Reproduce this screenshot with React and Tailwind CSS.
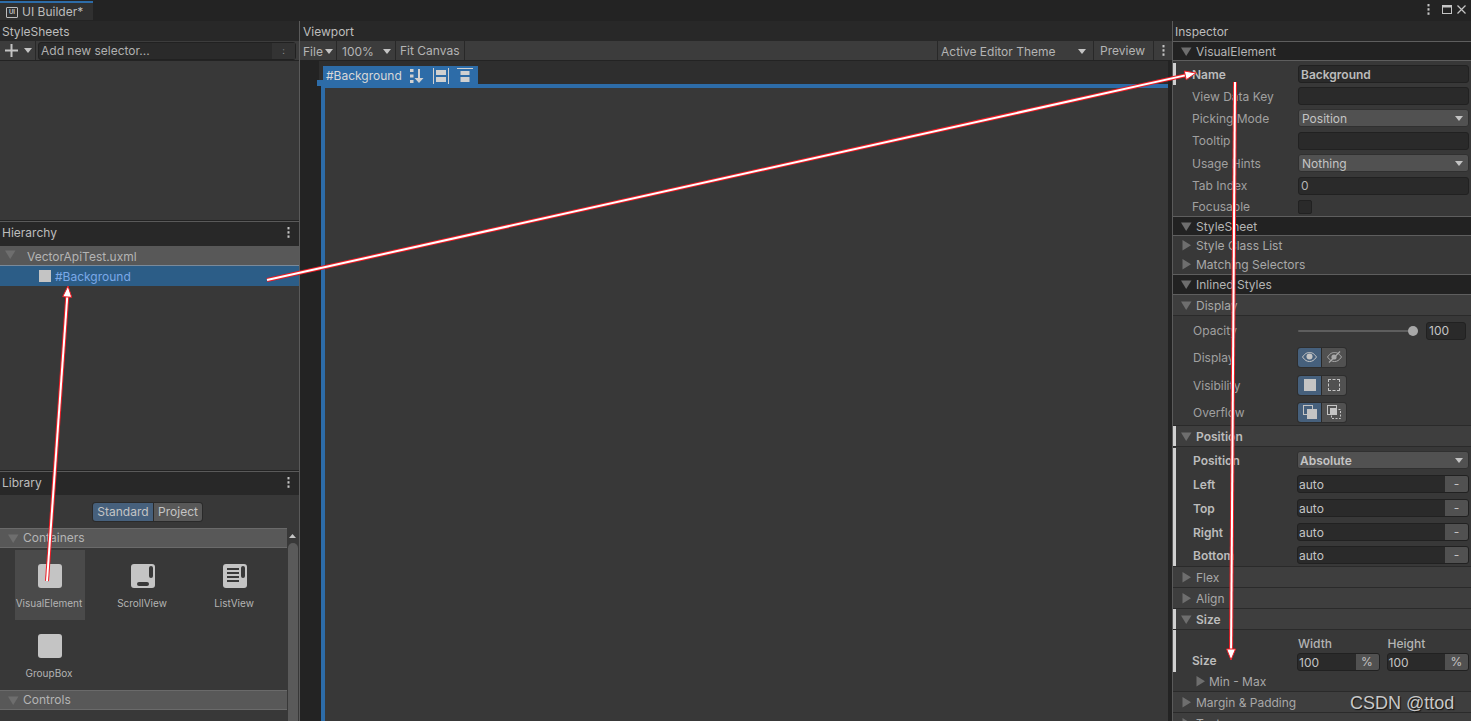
import React from 'react';

const FONT = "font-['Inter','Noto_Sans',sans-serif]";

function Caret({ open = true, className = '' }) {
  return (
    <svg width="11" height="11" viewBox="0 0 11 11" className={`shrink-0 ${className}`}>
      {open ? <path d="M0 1.5h10.5L5.2 10z" fill="#6e6e6e" /> : <path d="M1.5 0v10.5L10 5.2z" fill="#6e6e6e" />}
    </svg>
  );
}

function SmallCaret({ color = '#c4c4c4' }) {
  return (
    <svg width="8" height="5" viewBox="0 0 8 5" className="shrink-0">
      <path d="M0 0h8L4 5z" fill={color} />
    </svg>
  );
}

function Dots({ className = '' }) {
  return (
    <svg width="3" height="11" viewBox="0 0 3 11" className={className}>
      <rect x="0.5" y="0" width="2" height="2.4" fill="#c4c4c4" />
      <rect x="0.5" y="4.2" width="2" height="2.4" fill="#c4c4c4" />
      <rect x="0.5" y="8.4" width="2" height="2.4" fill="#c4c4c4" />
    </svg>
  );
}

function PanelTitle({ title, menu, className = 'h-5 pt-[1px]' }) {
  return (
    <div className={`flex items-center justify-between bg-[#282828] pl-[2px] pr-[9px] text-[12px] text-[#bdbdbd] ${className}`}>
      <span>{title}</span>
      {menu && <Dots />}
    </div>
  );
}

function TileIcon({ kind }) {
  return (
    <svg width="24" height="24" viewBox="0 0 24 24">
      <rect width="24" height="24" rx="3" fill="#c4c4c4" />
      {kind === 'scroll' && (
        <>
          <rect x="18" y="2" width="4" height="12" rx="2" fill="#383838" />
          <rect x="6" y="18" width="12" height="4" rx="2" fill="#383838" />
        </>
      )}
      {kind === 'list' && (
        <>
          <rect x="4" y="4" width="12" height="2" fill="#383838" />
          <rect x="4" y="8" width="12" height="2" fill="#383838" />
          <rect x="4" y="12" width="12" height="2" fill="#383838" />
          <rect x="4" y="16" width="12" height="2" fill="#383838" />
          <rect x="18" y="2" width="4" height="12" rx="2" fill="#383838" />
        </>
      )}
    </svg>
  );
}

function Tile({ name, kind, active }) {
  return (
    <div className={`flex h-[70px] w-[70px] flex-col items-center pt-[14px] ${active ? 'bg-[#4a4a4a]' : ''}`}>
      <TileIcon kind={kind} />
      <span className="mt-[9px] mr-[2px] text-[10px] leading-[12px] whitespace-nowrap text-[#b4b4b4]">{name}</span>
    </div>
  );
}

function LibraryCategory({ title }) {
  return (
    <div className="flex h-5 items-center gap-[4px] border-y border-[#6a6a6a] bg-[#585858] pl-[8px] text-[12px] text-[#b4b4b4]">
      <Caret />
      <span>{title}</span>
    </div>
  );
}

function LeftColumn() {
  return (
    <div className="flex w-[300px] shrink-0 flex-col border-r border-[#5a5a5a] bg-[#383838]">
      <PanelTitle title="StyleSheets" />
      <div className="flex h-5 items-center border-b border-[#232323] bg-[#3c3c3c]">
        <div className="flex h-full w-[36px] items-center gap-[6px] border-r border-[#282828] pl-[5px]">
          <svg width="13" height="13" viewBox="0 0 13 13">
            <path d="M5.5 0h2v5.5H13v2H7.5V13h-2V7.5H0v-2h5.5z" fill="#c4c4c4" />
          </svg>
          <SmallCaret />
        </div>
        <div className="ml-[2px] flex h-[18px] w-[258px] items-center justify-between rounded-[3px] border border-[#212121] bg-[#2a2a2a] pl-[2px] text-[12px] text-[#b0b0b0]">
          <span className="pt-[1px]">Add new selector...</span>
          <span className="flex h-full w-[23px] items-center justify-center bg-[#333333] text-[9px] text-[#8a8a8a]">:</span>
        </div>
      </div>
      <div className="h-[160px] border-b border-[#232323]" />
      <PanelTitle title="Hierarchy" menu className="h-[25px] border-t border-[#5a5a5a] pb-[3px]" />
      <div className="flex h-[19px] items-center gap-[11px] bg-[#585858] pt-[3px] pl-[5px] text-[12px] text-[#b4b4b4]">
        <Caret className="-mt-[5px]" />
        <span>VectorApiTest.uxml</span>
      </div>
      <div className="flex h-[21px] items-center border-t border-[#7a8a9a] bg-[#2c5d87] pl-[39px] text-[12px] text-[#7ba9e8]">
        <span className="mr-[4px] h-3 w-3 bg-[#c4c4c4]" />
        <span className="pt-[1px]">#Background</span>
      </div>
      <div className="h-[185px] border-b border-[#232323]" />
      <PanelTitle title="Library" menu className="h-[24px] border-t border-[#5a5a5a] pb-[2px]" />
      <div className="flex h-[33px] items-center justify-center pr-[4px]">
        <div className="flex h-[20px] items-center rounded-[3px] border border-[#2a2a2a] text-[12px] text-[#c4c4c4]">
          <span className="flex h-full w-[61px] items-center justify-center rounded-l-[3px] border-r border-[#2a2a2a] bg-[#46607c]">Standard</span>
          <span className="flex h-full w-[48px] items-center justify-center rounded-r-[3px] bg-[#585858]">Project</span>
        </div>
      </div>
      <div className="flex min-h-0 flex-1">
        <div className="w-[287px] shrink-0 overflow-hidden">
          <LibraryCategory title="Containers" />
          <div className="grid grid-cols-[93px_92px_70px] pt-[2px] pl-[15px]">
            <Tile name="VisualElement" active />
            <Tile name="ScrollView" kind="scroll" />
            <Tile name="ListView" kind="list" />
            <Tile name="GroupBox" />
          </div>
          <LibraryCategory title="Controls" />
        </div>
        <div className="flex w-[11px] flex-col items-center pt-[6px]">
          <svg width="7" height="4" viewBox="0 0 7 4">
            <path d="M3.5 0L7 4H0z" fill="#c4c4c4" />
          </svg>
          <div className="mt-[5px] w-[10px] flex-1 rounded-t-[5px] bg-[#5a5a5a]" />
        </div>
      </div>
    </div>
  );
}

function ViewportToolbar() {
  return (
    <div className="flex h-5 items-center border-b border-[#232323] bg-[#3c3c3c] text-[12px] text-[#b4b4b4]">
      <div className="flex h-full w-[37px] items-center gap-[2px] border-r border-[#282828] pt-[2px] pl-[3px]">
        File <SmallCaret />
      </div>
      <div className="flex h-full w-[59px] items-center justify-between border-r border-[#282828] pt-[2px] pr-[4px] pl-[5px]">
        100% <SmallCaret />
      </div>
      <div className="flex h-full w-[69px] items-center border-r border-[#282828] pt-[1px] pl-[4px]">Fit Canvas</div>
      <div className="flex-1" />
      <div className="flex h-full w-[157px] items-center justify-between border-x border-[#282828] pt-[2px] pr-[7px] pl-[3px]">
        Active Editor Theme <SmallCaret />
      </div>
      <div className="flex h-full w-[60px] items-center border-r border-[#282828] pt-[1px] pl-[6px]">Preview</div>
      <div className="flex w-[18px] justify-center">
        <Dots />
      </div>
    </div>
  );
}

function CanvasHeaderIcons() {
  return (
    <div className="ml-[8px] flex items-center">
      <svg width="14" height="14" viewBox="0 0 14 14">
        <path d="M0 0h3.5v3H0zM0 5.5h3.5v3H0zM0 11h3.5v3H0z" fill="#d0d0d0" />
        <path d="M8 0h2v9h3.5L9 14 4.5 9H8z" fill="#d0d0d0" />
      </svg>
      <svg width="16" height="16" viewBox="0 0 16 16" className="ml-[9px]">
        <path d="M0.5 0v16M15.5 0v16" stroke="#d0d0d0" strokeWidth="1" />
        <rect x="3" y="2" width="10" height="5" fill="#d0d0d0" />
        <rect x="3" y="9" width="10" height="5" fill="#d0d0d0" />
      </svg>
      <svg width="16" height="16" viewBox="0 0 16 16" className="ml-[8px]">
        <path d="M0 0.5h16" stroke="#d0d0d0" strokeWidth="1" />
        <rect x="3.5" y="3" width="9" height="4" fill="#d0d0d0" />
        <rect x="3.5" y="9" width="9" height="5" fill="#d0d0d0" />
      </svg>
    </div>
  );
}

function Viewport() {
  return (
    <div className="flex w-[872px] shrink-0 flex-col bg-[#232323]">
      <PanelTitle title="Viewport" className="h-5 pt-[1px] pl-[3px]" />
      <ViewportToolbar />
      <div className="flex min-h-0 flex-1 flex-col pr-[4px] pl-[19px]">
        <div className="relative flex h-[23px] shrink-0 flex-col justify-end bg-[#2e2e2e] pl-[4px]">
          <div className="flex h-[18px] w-[155px] items-center bg-[#2d6ca8] pt-[1px] pl-[3px] text-[12px] text-[#d8d8d8]">
            #Background
            <CanvasHeaderIcons />
          </div>
          <div className="absolute -left-[2px] top-[19px] h-[6px] w-[6px] bg-[#2d6ca8]" />
        </div>
        <div className="ml-[2px] min-h-0 flex-1 border-t-[4px] border-l-[4px] border-[#2d6ca8] bg-[#383838]" />
      </div>
    </div>
  );
}

function SectionHeader({ title, h = 'h-5' }) {
  return (
    <div className={`flex items-center gap-[4px] border-y border-[#5e5e5e] bg-[#222222] pl-[8px] text-[12px] text-[#b4b4b4] ${h}`}>
      <Caret />
      <span className="pt-[1px]">{title}</span>
    </div>
  );
}

function Foldout({ title, open = true, bold, mark }) {
  return (
    <div className={`relative flex h-[21px] items-center gap-[4px] border-b border-[#2a2a2a] bg-[#3e3e3e] pl-[8px] text-[12px] ${bold ? 'font-semibold text-[#bcbcbc]' : 'text-[#a8a8a8]'}`}>
      {mark && <span className="absolute top-0 left-0 h-full w-[3px] bg-[#d0d0d0]" />}
      <Caret open={open} />
      <span className="pt-[1px]">{title}</span>
    </div>
  );
}

function Row({ label, h, bold, mark, tight, children }) {
  return (
    <div className={`relative flex items-center pr-[2px] text-[12px] ${tight ? 'pl-[20px]' : 'pl-[19px]'} ${bold ? 'font-semibold text-[#bcbcbc]' : 'text-[#a0a0a0]'} ${h}`}>
      {mark && <span className="absolute top-0 left-0 h-full w-[3px] bg-[#d0d0d0]" />}
      <span className={`shrink-0 pt-[1px] ${tight ? 'w-[104px]' : 'w-[106px]'}`}>{label}</span>
      <div className="min-w-0 flex-1">{children}</div>
    </div>
  );
}

function TextInput({ value, bold }) {
  return (
    <div className={`flex h-[18px] items-center rounded-[3px] border border-[#212121] bg-[#2a2a2a] pt-[1px] pl-[2px] text-[12px] ${bold ? 'font-semibold text-[#bcbcbc]' : 'text-[#b4b4b4]'}`}>
      {value}
    </div>
  );
}

function Dropdown({ value, bold }) {
  return (
    <div className={`flex h-[18px] items-center justify-between rounded-[3px] border border-[#303030] bg-[#515151] pr-[5px] text-[12px] text-[#c4c4c4] ${bold ? 'pl-[2px] font-semibold' : 'pl-[3px]'}`}>
      <span className="pt-[1px]">{value}</span>
      <SmallCaret />
    </div>
  );
}

function LengthInput({ value = 'auto', unit = '-' }) {
  return (
    <div className="flex h-[18px] items-center overflow-hidden rounded-[3px] border border-[#212121] bg-[#2a2a2a] pl-[1px] text-[12px] font-normal text-[#c4c4c4]">
      <span className="flex-1 pt-[1px]">{value}</span>
      <span className="flex h-full w-[23px] items-center justify-center bg-[#515151]">{unit}</span>
    </div>
  );
}

function Toggle({ on, children }) {
  return (
    <span className={`flex h-full w-[24px] items-center justify-center ${on ? 'rounded-l-[3px] border-r border-[#2a2a2a] bg-[#46607c]' : 'rounded-r-[3px] bg-[#515151]'}`}>
      {children}
    </span>
  );
}

function StyleToggles({ first, second }) {
  return (
    <div className="flex h-[21px] w-[50px] rounded-[3px] border border-[#2e2e2e]">
      <Toggle on>{first}</Toggle>
      <Toggle>{second}</Toggle>
    </div>
  );
}

const EyeOpen = (
  <svg width="15" height="10" viewBox="0 0 15 10">
    <path d="M0.5 5C3 1.5 5 0.5 7.5 0.5S12 1.5 14.5 5C12 8.5 10 9.5 7.5 9.5S3 8.5 0.5 5z" fill="none" stroke="#c4c4c4" />
    <circle cx="7.5" cy="4.6" r="3" fill="#c4c4c4" />
  </svg>
);
const EyeOff = (
  <svg width="15" height="12" viewBox="0 0 15 12">
    <path d="M0.5 6C3 2.5 5 1.5 7.5 1.5S12 2.5 14.5 6C12 9.5 10 10.5 7.5 10.5S3 9.5 0.5 6z" fill="none" stroke="#a8a8a8" />
    <circle cx="7" cy="6" r="2.6" fill="#a8a8a8" />
    <path d="M2 11.5L13 .5" stroke="#a8a8a8" strokeWidth="1.2" />
  </svg>
);
const SolidBox = <span className="h-3 w-3 bg-[#c4c4c4]" />;
const DashBox = <span className="h-3 w-3 rounded-[1px] border border-dashed border-[#c4c4c4]" />;
const OverflowOn = (
  <svg width="14" height="14" viewBox="0 0 14 14">
    <rect x="0.5" y="0.5" width="9" height="9" fill="none" stroke="#c4c4c4" />
    <rect x="4" y="4" width="10" height="10" fill="#c4c4c4" />
  </svg>
);
const OverflowOff = (
  <svg width="14" height="14" viewBox="0 0 14 14">
    <rect x="0.5" y="0.5" width="9" height="9" fill="none" stroke="#c4c4c4" />
    <rect x="3" y="3" width="6" height="6" fill="#c4c4c4" />
    <rect x="4.5" y="4.5" width="9" height="9" fill="none" stroke="#c4c4c4" strokeDasharray="2 1.5" />
  </svg>
);

function Inspector() {
  return (
    <div className="min-w-0 flex-1 overflow-hidden border-l border-[#5a5a5a] bg-[#383838]">
      <PanelTitle title="Inspector" />
      <SectionHeader title="VisualElement" />

      <div className="pt-[2px]">
        <Row label="Name" h="h-[22px]" bold mark><TextInput value="Background" bold /></Row>
        <Row label="View Data Key" h="h-[22px]"><TextInput /></Row>
        <Row label="Picking Mode" h="h-[22px]"><Dropdown value="Position" /></Row>
        <Row label="Tooltip" h="h-[23px]"><TextInput /></Row>
        <Row label="Usage Hints" h="h-[22px]"><Dropdown value="Nothing" /></Row>
        <Row label="Tab Index" h="h-[23px]"><TextInput value="0" /></Row>
        <Row label="Focusable" h="h-[19px]">
          <span className="block h-[14px] w-[14px] rounded-[2px] border border-[#212121] bg-[#2a2a2a]" />
        </Row>
      </div>

      <SectionHeader title="StyleSheet" />
      <div className="flex h-[19px] items-center gap-[4px] pl-[8px] text-[12px] text-[#a8a8a8]"><Caret open={false} />Style Class List</div>
      <div className="flex h-[19px] items-center gap-[4px] pl-[8px] text-[12px] text-[#a8a8a8]"><Caret open={false} />Matching Selectors</div>
      <SectionHeader title="Inlined Styles" h="h-[21px]" />

      <Foldout title="Display" />
      <div className="flex h-[27px] items-center pt-[3px] pr-[5px] pl-[20px] text-[12px] text-[#a0a0a0]">
        <span className="w-[105px]">Opacity</span>
        <div className="relative mr-[8px] h-[2px] w-[120px] rounded-full bg-[#5e5e5e]">
          <span className="absolute top-[-4px] right-0 h-[10px] w-[10px] rounded-full bg-[#a8a8a8]" />
        </div>
        <span className="flex h-[18px] w-[40px] items-center rounded-[3px] border border-[#212121] bg-[#2a2a2a] pl-[2px] text-[#c4c4c4]">100</span>
      </div>
      <Row label="Display" h="h-[28px]" tight><StyleToggles first={EyeOpen} second={EyeOff} /></Row>
      <Row label="Visibility" h="h-[28px]" tight><StyleToggles first={SolidBox} second={DashBox} /></Row>
      <div className="h-[27px] border-b border-[#2a2a2a]">
        <Row label="Overflow" h="h-[26px]" tight><StyleToggles first={OverflowOn} second={OverflowOff} /></Row>
      </div>

      <Foldout title="Position" bold mark />
      <div className="pt-[1px]">
        <Row label="Position" h="h-[24px]" bold mark tight><Dropdown value="Absolute" bold /></Row>
        <Row label="Left" h="h-[24px]" bold mark tight><LengthInput /></Row>
        <Row label="Top" h="h-[24px]" bold mark tight><LengthInput /></Row>
        <Row label="Right" h="h-[24px]" bold mark tight><LengthInput /></Row>
        <Row label="Bottom" h="h-[22px]" bold mark tight><LengthInput /></Row>
      </div>
      <div className="border-t border-[#2a2a2a]" />
      <Foldout title="Flex" open={false} />
      <Foldout title="Align" open={false} />
      <Foldout title="Size" bold mark />

      <div className="relative flex h-[42px] pr-[2px] pl-[19px] text-[12px] font-semibold text-[#bcbcbc]">
        <span className="absolute top-0 left-0 h-full w-[3px] bg-[#d0d0d0]" />
        <span className="mt-[22px] w-[105px]">Size</span>
        <div className="grid flex-1 grid-cols-2 gap-[7px] pt-[5px]">
          <div>
            <div className="h-[18px] pl-[1px] leading-[18px] font-medium text-[#b4b4b4]">Width</div>
            <LengthInput value="100" unit="%" />
          </div>
          <div>
            <div className="h-[18px] pl-[1px] leading-[18px] font-medium text-[#b4b4b4]">Height</div>
            <LengthInput value="100" unit="%" />
          </div>
        </div>
      </div>
      <div className="flex h-[20px] items-center gap-[3px] border-b border-[#2a2a2a] pl-[22px] text-[12px] text-[#a8a8a8]"><Caret open={false} />Min - Max</div>
      <Foldout title="Margin & Padding" open={false} />
      <Foldout title="Text" open={false} />
    </div>
  );
}

function Arrow({ x1, y1, x2, y2 }) {
  const angle = Math.atan2(y2 - y1, x2 - x1);
  const head = 11;
  const spread = 4.5;
  const bx = x2 - Math.cos(angle) * head;
  const by = y2 - Math.sin(angle) * head;
  const nx = -Math.sin(angle) * spread;
  const ny = Math.cos(angle) * spread;
  return (
    <g>
      <line x1={x1} y1={y1} x2={bx} y2={by} stroke="#ee1c24" strokeWidth="4" />
      <line x1={x1} y1={y1} x2={bx} y2={by} stroke="#ffffff" strokeWidth="2" />
      <polygon points={`${x2},${y2} ${bx + nx},${by + ny} ${bx - nx},${by - ny}`} fill="#ffffff" stroke="#ee1c24" strokeWidth="1" />
    </g>
  );
}

export default function App() {
  return (
    <div className={`relative flex h-screen w-full flex-col overflow-hidden bg-[#282828] ${FONT}`}>
      {/* Window tab bar */}
      <div className="flex h-[21px] shrink-0 items-end justify-between border-b border-[#232323] bg-[#232323]">
        <div className="flex h-[19px] w-[93px] items-center gap-[4px] border-t-2 border-[#2d6ca8] bg-[#303030] pt-[1px] pl-[6px] text-[12px] text-[#bdbdbd]">
          <span className="flex h-[11px] w-[12px] items-center justify-center rounded-[1px] border border-[#bdbdbd] text-[6px] leading-none font-bold">UI</span>
          UI Builder*
        </div>
        <div className="mb-[5px] flex items-center pr-[5px]">
          <Dots />
          <svg width="10" height="9" viewBox="0 0 10 9" className="ml-[12px]">
            <rect x="0.5" y="0.5" width="9" height="8" fill="none" stroke="#c4c4c4" />
            <path d="M0 1.5h10" stroke="#c4c4c4" strokeWidth="2" />
          </svg>
          <svg width="9" height="9" viewBox="0 0 9 9" className="ml-[5px]">
            <path d="M.5.5l8 8M8.5.5l-8 8" stroke="#c4c4c4" strokeWidth="1.2" />
          </svg>
        </div>
      </div>

      <div className="flex min-h-0 flex-1">
        <LeftColumn />
        <Viewport />
        <Inspector />
      </div>

      {/* Annotation arrows drawn over the screenshot */}
      <svg width="1471" height="721" className="pointer-events-none absolute top-0 left-0">
        <Arrow x1={267} y1={280} x2={1196} y2={73} />
        <Arrow x1={47} y1={581} x2={68} y2={286} />
        <Arrow x1={1235} y1={82} x2={1231} y2={660} />
      </svg>

      <span className="absolute top-[692px] left-[1350px] font-['Liberation_Sans',sans-serif] text-[18px] leading-[23px] text-[#c8c8c8] [text-shadow:1px_1px_1px_#111111]">
        CSDN @ttod
      </span>
    </div>
  );
}
